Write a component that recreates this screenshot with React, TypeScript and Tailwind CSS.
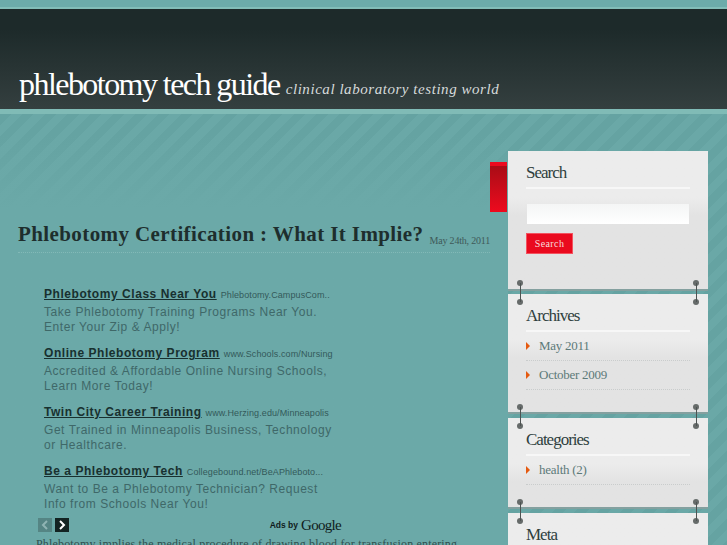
import { ReactNode } from "react"

const ads = [
    { title: "Phlebotomy Class Near You", url: "Phlebotomy.CampusCom..", lines: ["Take Phlebotomy Training Programs Near You.", "Enter Your Zip & Apply!"] },
    { title: "Online Phlebotomy Program", url: "www.Schools.com/Nursing", lines: ["Accredited & Affordable Online Nursing Schools,", "Learn More Today!"] },
    { title: "Twin City Career Training", url: "www.Herzing.edu/Minneapolis", lines: ["Get Trained in Minneapolis Business, Technology", "or Healthcare."] },
    { title: "Be a Phlebotomy Tech", url: "Collegebound.net/BeAPhleboto...", lines: ["Want to Be a Phlebotomy Technician? Request", "Info from Schools Near You!"] },
]

function Pin({ side }: { side: "left" | "right" }) {
    return (
        <div className={`absolute top-[-14px] z-10 flex h-[25px] w-[6px] flex-col items-center justify-between ${side === "left" ? "left-[9px]" : "right-[9px]"}`}>
            <div className="h-[6px] w-[6px] rounded-full bg-[#666b6a]"></div>
            <div className="absolute top-[3px] h-[19px] w-px bg-[#4d5352]"></div>
            <div className="h-[6px] w-[6px] rounded-full bg-[#666b6a]"></div>
        </div>
    )
}

function Box({ title, height, pins, children }: { title: string, height: string, pins?: boolean, children?: ReactNode }) {
    return (
        <div className={`relative w-[200px] shrink-0 border-b-2 border-[#84a09f] bg-gradient-to-b from-[#ececec] from-[46px] to-[#e3e3e3] to-[64px] px-[18px] ${height}`}>
            {pins && <Pin side="left" />}
            {pins && <Pin side="right" />}
            <h3 className="border-b-2 border-[#f7f7f7] pt-[12px] pb-[4px] text-[17px] leading-[20px] tracking-[-1px] text-[#2f3f3e]">{title}</h3>
            {children}
        </div>
    )
}

function Item({ label }: { label: string }) {
    return (
        <div className="flex h-[29px] items-center gap-[9px] border-b border-dotted border-[#c9cccc] pb-[1px] text-[13px] tracking-[-0.25px] text-[#5d7a79]">
            <div className="h-0 w-0 border-y-[4px] border-l-[4px] border-y-transparent border-l-[#e55a10]"></div>
            <span>{label}</span>
        </div>
    )
}

export default function App() {
    return (
        <div className="h-[545px] w-[727px] overflow-hidden bg-[#6ba9a8] font-['Liberation_Serif',serif]">
            {/* header */}
            <div className="h-[9px] border-b-[2px] border-[#82bdb8] bg-[#6cabaa]"></div>
            <div className="flex h-[100px] items-end bg-gradient-to-b from-[#1d2a2a] from-[20%] to-[#343f3f] pb-[5px] pl-[19px]">
                <span className="text-[32px] leading-[40px] tracking-[-1.55px] text-white">phlebotomy tech guide</span>
                <span className="mb-[3px] ml-[6px] text-[15px] leading-[24px] tracking-[0.55px] text-[#d6dada] italic">clinical laboratory testing world</span>
            </div>
            <div className="h-[5px] bg-[#80bbb6]"></div>

            <div className="flex h-[431px] bg-[repeating-linear-gradient(135deg,#65a3a2_0px,#65a3a2_8px,#6aa8a7_8px,#6aa8a7_16px)]">
                {/* left column */}
                <div className="relative h-full w-[508px] bg-gradient-to-b from-transparent from-[5%] to-[#6ba9a8] to-[22%] pt-[106px] pl-[18px]">
                    <div className="absolute top-[48px] left-[490px] h-[50px] w-[17px] border-t-4 border-[#ec0a1f] bg-gradient-to-b from-[#a90c16] to-[#ee0a1e]"></div>
                    <div className="flex h-[33px] w-[472px] items-end justify-between border-b border-dotted border-[#83b9b7] pb-[5px] whitespace-nowrap">
                        <h1 className="text-[21px] leading-[26px] font-bold tracking-[0.4px] text-[#1e2e2d]">Phlebotomy Certification : What It Implie?</h1>
                        <span className="text-[10px] leading-[12px] tracking-[-0.2px] text-[#3f5a59]">May 24th, 2011</span>
                    </div>

                    <div className="mt-[33px] ml-[26px] flex flex-col gap-[13px] font-['Liberation_Sans',sans-serif]">
                        {ads.map((ad) => (
                            <div key={ad.title} className="h-[46px] w-[300px]">
                                <div className="flex h-[17px] items-baseline gap-[4px] whitespace-nowrap">
                                    <span className="text-[12px] leading-[16px] font-bold tracking-[0.55px] text-[#18302f] underline">{ad.title}</span>
                                    <span className="text-[9px] tracking-[0.1px] text-[#33595a]">{ad.url}</span>
                                </div>
                                <div className="mt-[2px] text-[12px] leading-[15px] tracking-[0.55px] whitespace-nowrap text-[#3f6868]">
                                    {ad.lines.map((l) => <div key={l}>{l}</div>)}
                                </div>
                            </div>
                        ))}
                    </div>

                    <div className="mt-[9px] ml-[20px] flex h-[14px] w-[303px] items-center gap-[3px]">
                        <div className="flex h-[14px] w-[14px] items-center justify-center bg-[#558584]">
                            <svg width="8" height="10" viewBox="0 0 8 10"><path d="M6 1 L2 5 L6 9" fill="none" stroke="#8fb4b3" strokeWidth="2" /></svg>
                        </div>
                        <div className="flex h-[14px] w-[14px] items-center justify-center bg-[#132322]">
                            <svg width="8" height="10" viewBox="0 0 8 10"><path d="M2 1 L6 5 L2 9" fill="none" stroke="#fff" strokeWidth="2" /></svg>
                        </div>
                        <div className="ml-auto flex items-center gap-[3px] text-[#101c1c]">
                            <span className="font-['Liberation_Sans',sans-serif] text-[8.5px] font-bold">Ads by</span>
                            <span className="text-[15px] leading-[14px] tracking-[-0.7px]">Google</span>
                        </div>
                    </div>
                    <p className="mt-[5px] ml-[18px] w-[460px] text-[12px] leading-[14px] tracking-[0.17px] whitespace-nowrap text-[#2f4f4e]">Phlebotomy implies the medical procedure of drawing blood for transfusion entering</p>
                </div>

                {/* sidebar */}
                <div className="flex w-[200px] flex-col gap-[3px] pt-[37px]">
                    <Box title="Search" height="h-[140px]">
                        <div className="mt-[15px] ml-px h-[20px] w-[162px] bg-gradient-to-b from-[#f4f5f5] to-white"></div>
                        <button className="mt-[9px] h-[21px] w-[47px] border border-[#f3525f] bg-[#ea0a1e] text-[10px] tracking-[0.4px] text-[#f7dcdc]">Search</button>
                    </Box>
                    <Box title="Archives" height="h-[120px]" pins>
                        <Item label="May 2011" />
                        <Item label="October 2009" />
                    </Box>
                    <Box title="Categories" height="h-[91px] mt-[1px]" pins>
                        <Item label="health (2)" />
                    </Box>
                    <Box title="Meta" height="h-[60px] mt-[1px]" pins />
                </div>
            </div>
        </div>
    )
}
